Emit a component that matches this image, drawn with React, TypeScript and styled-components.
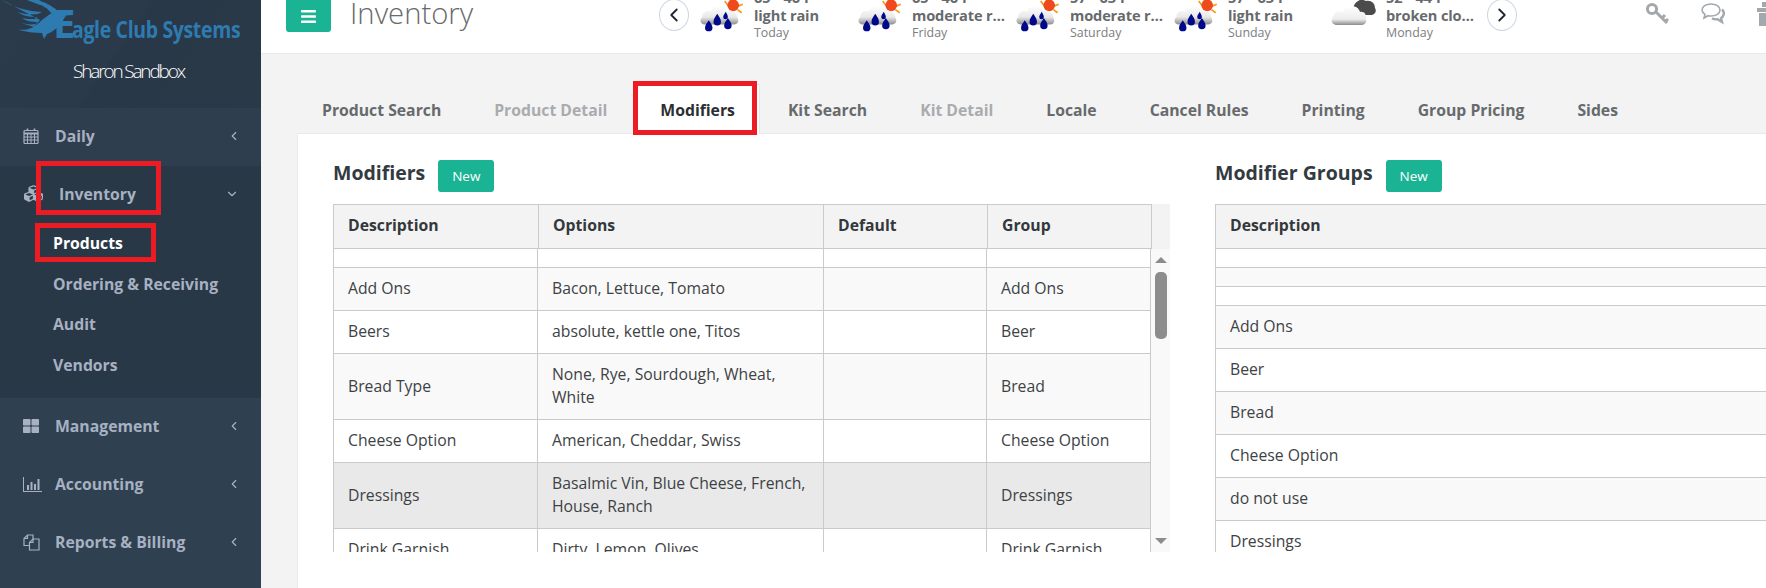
import React from 'react';
import styled, { createGlobalStyle } from 'styled-components';
import { FaCubes, FaThLarge, FaBars } from 'react-icons/fa';
import { FiChevronLeft, FiChevronRight, FiChevronDown } from 'react-icons/fi';

const Global = createGlobalStyle`
  html, body { margin: 0; padding: 0; background: #f3f3f4; }
  body { font-family: "Open Sans", "Liberation Sans", sans-serif; color: #676a6c; }
  * { box-sizing: border-box; }
`;

const Page = styled.div`
  position: relative;
  display: flex;
  width: 1766px;
  height: 588px;
  overflow: hidden;
`;

const Sidebar = styled.aside`
  flex: none;
  width: 261px;
  display: flex;
  flex-direction: column;
  background: #2f4050;
`;

const Brand = styled.div`
  height: 108px;
  background: linear-gradient(125deg, #2b3b4b 0%, #2a3a4a 45%, #293848 46%, #2a3947 100%);
  display: flex;
  flex-direction: column;
`;

const Logo = styled.div`
  position: relative;
  height: 58px;
  padding-left: 53px;
  display: flex;
  align-items: baseline;
  color: #2e7bb2;
  font-weight: 700;
  line-height: 58px;
  svg { position: absolute; left: 0; top: 0; }
`;

const LogoInitial = styled.span`
  font-size: 40px;
  line-height: 58px;
  font-weight: 700;
  margin-top: -9px;
`;

const LogoRest = styled.span`
  display: inline-block;
  font-size: 24px;
  font-weight: 700;
  letter-spacing: -0.4px;
  white-space: nowrap;
  margin-left: -3px;
  transform: scaleX(0.81);
  transform-origin: left center;
`;

const SiteName = styled.div`
  margin-top: 2px;
  text-align: center;
  color: #fff;
  font-size: 19px;
  font-weight: 300;
  letter-spacing: -2.15px;
  line-height: 22px;
  padding-right: 4px;
`;

const NavGroup = styled.div<{ $open?: boolean; $active?: boolean }>`
  background: ${p => (p.$open ? '#293846' : p.$active ? '#2f3e4e' : 'transparent')};
  padding-bottom: ${p => (p.$open ? '13px' : '0')};
`;

const NavRow = styled.div<{ $open?: boolean }>`
  height: ${p => (p.$open ? '57px' : '58px')};
  display: flex;
  align-items: center;
  padding: 0 ${p => (p.$open ? '22px' : '20px')} 2px ${p => (p.$open ? '24px' : '23px')};
  color: #a7b1c2;
  font-size: 15.75px;
  font-weight: 700;
`;

const NavIcon = styled.span<{ $wide?: boolean }>`
  flex: none;
  width: ${p => (p.$wide ? '35px' : '32px')};
  display: flex;
  align-items: center;
  font-size: ${p => (p.$wide ? '19px' : '16px')};
`;

const NavLabel = styled.span`
  flex: 1;
`;

const SubRow = styled.div<{ $current?: boolean }>`
  height: 40.5px;
  display: flex;
  align-items: center;
  padding-left: 53px;
  font-size: 15.75px;
  font-weight: 700;
  color: ${p => (p.$current ? '#fff' : '#a7b1c2')};
`;

const Main = styled.main`
  flex: 1;
  min-width: 0;
  display: flex;
  flex-direction: column;
  background: #f3f3f4;
`;

const TopBar = styled.header`
  flex: none;
  height: 54px;
  background: #fff;
  border-bottom: 1px solid #e7eaec;
  display: flex;
  align-items: flex-start;
  overflow: hidden;
  padding-left: 25px;
`;

const MenuButton = styled.div`
  flex: none;
  width: 45px;
  height: 32px;
  background: #1ab394;
  border-radius: 0 0 3px 3px;
  color: #fff;
  display: flex;
  align-items: center;
  justify-content: center;
  font-size: 17px;
`;

const PageTitle = styled.h1`
  flex: none;
  width: 309px;
  margin: -8px 0 0 19px;
  font-size: 29.25px;
  line-height: 42px;
  font-weight: 300;
  color: #676a6c;
`;

const RoundButton = styled.div<{ $next?: boolean }>`
  flex: none;
  width: 30px;
  height: 32px;
  margin-top: -1px;
  margin-left: ${p => (p.$next ? '8px' : '0')};
  border: 1px solid #cfd6e0;
  border-radius: 50%;
  background: #fff;
  color: #1c2733;
  display: flex;
  align-items: center;
  justify-content: center;
  font-size: 22px;
`;

const Weather = styled.div`
  flex: none;
  width: 158px;
  display: flex;
  align-items: flex-start;
  padding-left: 10px;
`;

const WeatherIconBox = styled.div`
  flex: none;
  width: 55px;
  height: 34px;
`;

const WeatherText = styled.div`
  flex: none;
  width: 97px;
  margin-top: -9px;
`;

const Temp = styled.div`
  font-size: 14.5px;
  line-height: 14px;
  font-weight: 700;
  white-space: nowrap;
`;

const Condition = styled.div`
  font-size: 14.6px;
  line-height: 20px;
  font-weight: 700;
  white-space: nowrap;
  overflow: hidden;
  text-overflow: ellipsis;
  letter-spacing: -0.15px;
`;

const Day = styled.div`
  font-size: 12.4px;
  line-height: 15px;
  color: #7b7e80;
`;

const TopIcons = styled.div`
  flex: none;
  display: flex;
  gap: 32px;
  margin-left: 128px;
  margin-top: 2px;
  color: #a8adb2;
`;

const TabBar = styled.nav`
  flex: none;
  height: 79px;
  padding: 30px 0 0 36px;
  display: flex;
  align-items: stretch;
`;

const Tab = styled.div<{ $active?: boolean; $disabled?: boolean }>`
  flex: none;
  height: 50px;
  padding: 0 24px;
  margin-right: 3px;
  display: flex;
  align-items: center;
  font-size: 15.75px;
  font-weight: 700;
  white-space: nowrap;
  color: ${p => (p.$active ? '#2b2f33' : p.$disabled ? '#a9abad' : '#676a6c')};
  background: ${p => (p.$active ? '#fff' : 'transparent')};
  border: 1px solid ${p => (p.$active ? '#e7eaec' : 'transparent')};
  border-bottom: 0;
  position: relative;
  z-index: 1;
`;

const Panel = styled.section`
  flex: 1;
  min-height: 0;
  margin-left: 36px;
  background: #fff;
  border-top: 1px solid #e7eaec;
  border-left: 1px solid #e7eaec;
  padding: 26px 0 0 35px;
  display: flex;
  gap: 45px;
  overflow: hidden;
`;

const Column = styled.div<{ $width: number }>`
  flex: none;
  width: ${p => p.$width}px;
`;

const SectionHead = styled.div`
  height: 32px;
  display: flex;
  align-items: center;
  gap: 13px;
  margin-bottom: 12px;
`;

const SectionTitle = styled.h2`
  margin: -7px 0 0 0;
  font-size: 19.5px;
  line-height: 24px;
  font-weight: 700;
  color: #333a40;
  white-space: nowrap;
`;

const NewButton = styled.button`
  width: 56px;
  height: 32px;
  border: 0;
  border-radius: 3px;
  background: #1ab394;
  color: #fff;
  font: 400 13.5px "Open Sans", sans-serif;
  padding: 0;
`;

const HeadWrap = styled.div`
  height: 45px;
  background: #f3f3f3;
`;

const GridTable = styled.table<{ $width: number }>`
  table-layout: fixed;
  width: ${p => p.$width}px;
  border-collapse: collapse;
  font-size: 15.75px;
  color: #3d4245;
`;

const HeadCell = styled.th<{ $width?: number }>`
  width: ${p => (p.$width ? `${p.$width}px` : 'auto')};
  height: 44px;
  padding: 0 14px 2px;
  text-align: left;
  font-weight: 700;
  color: #33383c;
  background: #f3f3f3;
  border: 1px solid #cacaca;
  border-bottom: 2px solid #cacaca;
`;

const BodyWrap = styled.div`
  height: 303px;
  display: flex;
  overflow: hidden;
`;

const BodyRow = styled.tr<{ $odd?: boolean; $hover?: boolean }>`
  background: ${p => (p.$hover ? '#e9e9e9' : p.$odd ? '#f9f9f9' : '#fff')};
`;

const BodyCell = styled.td<{ $blank?: boolean; $width?: number }>`
  width: ${p => (p.$width ? `${p.$width}px` : 'auto')};
  padding: ${p => (p.$blank ? '9px 14px' : '9px 14px 10px')};
  height: ${p => (p.$blank ? '18px' : 'auto')};
  line-height: 23px;
  border: 1px solid #cacaca;
  border-top: 0;
`;

const Scrollbar = styled.div`
  flex: none;
  width: 20px;
  background: #f9f9f9;
  display: flex;
  flex-direction: column;
  align-items: center;
  padding-top: 8px;
  padding-bottom: 8px;
`;

const ArrowUp = styled.div`
  width: 0;
  height: 0;
  border-left: 6px solid transparent;
  border-right: 6px solid transparent;
  border-bottom: 6px solid #8c8c8c;
`;

const ArrowDown = styled.div`
  width: 0;
  height: 0;
  margin-top: auto;
  border-left: 6px solid transparent;
  border-right: 6px solid transparent;
  border-top: 6px solid #8c8c8c;
`;

const Thumb = styled.div`
  width: 12px;
  height: 67px;
  margin-top: 9px;
  border-radius: 5px;
  background: #8c8c8c;
`;

const Annotation = styled.div<{ $x: number; $y: number; $w: number; $h: number }>`
  position: absolute;
  left: ${p => p.$x}px;
  top: ${p => p.$y}px;
  width: ${p => p.$w}px;
  height: ${p => p.$h}px;
  border: 5px solid #ed1c24;
  z-index: 5;
  pointer-events: none;
`;

const Eagle = () => (
  <svg width="76" height="42" viewBox="0 0 76 42" fill="#2e7bb2">
    <path d="M2 0 C12 7 26 11 42 12 L38 14 C30 15 24 14 17 12 C22 15 28 17 37 17 L35 19 C30 19 26 19 22 18 C26 21 31 22 37 22 L36 24 C30 25 25 24 18 22 L34 27 L40 20 Z" />
    <path d="M27 0 L35 0 L44 5 L40 5 Z M33 0 L39 0 L52 8 L46 8 Z M40 1 C47 3 54 7 59 12 L52 14 Z" />
    <path d="M17 29.5 C27 31 35 28 42 20 L50 14 L57 11 L65 11 L72 13.5 L72 15 L66 15.5 L62 22 C58 28 52 32 47 34 L44 39 L42 33 C34 33 26 32 17 29.5 Z" />
  </svg>
);

const RainIcon = () => (
  <svg width="45" height="34" viewBox="0 0 42 32">
    <defs>
      <linearGradient id="cloudFill" x1="0" y1="0" x2="0" y2="1">
        <stop offset="0" stopColor="#ffffff" />
        <stop offset=".6" stopColor="#e8e8e8" />
        <stop offset="1" stopColor="#8f8f8f" />
      </linearGradient>
    </defs>
    <g stroke="#f59b1a" strokeWidth="1.6">
      <path d="M29 0 L31 4 M41 4 L36 6 M40 12 L36 9 M24 1 L27 5" />
    </g>
    <circle cx="32" cy="5" r="5.5" fill="#ee4a1d" />
    <path d="M5 23 C1 23 0 18 3 16 C3 11 8 9 11 11 C13 4 23 4 26 10 C31 9 36 12 36 17 C38 20 36 23 33 23 Z" fill="url(#cloudFill)" />
    <g fill="#00088c">
      <path d="M9 19 C11 22 12.5 24 12.5 26 A3.5 3.5 0 0 1 5.5 26 C5.5 24 7 22 9 19 Z" />
      <path d="M17 13 C19 16 20.5 18 20.5 20.5 A3.5 3.5 0 0 1 13.5 20.5 C13.5 18 15 16 17 13 Z" />
      <path d="M25 11 C26 13 27 14.5 27 16 A2.2 2.2 0 0 1 22.6 16 C22.6 14.5 24 13 25 11 Z" />
      <path d="M27 17 C29 20 30.5 22 30.5 24 A3.5 3.5 0 0 1 23.5 24 C23.5 22 25 20 27 17 Z" />
    </g>
  </svg>
);

const CloudIcon = () => (
  <svg width="46" height="28" viewBox="0 0 46 28">
    <defs>
      <linearGradient id="brokenFill" x1="0" y1="0" x2="0" y2="1">
        <stop offset="0" stopColor="#ffffff" />
        <stop offset=".7" stopColor="#ececec" />
        <stop offset="1" stopColor="#8a8a8a" />
      </linearGradient>
    </defs>
    <path d="M22 8 C24 1 30 -2 35 1 C40 0 44 3 44 8 C46 11 44 15 40 15 L26 15 Z" fill="#4b4b4b" />
    <path d="M6 25 C1 25 -1 20 2 17 C3 12 8 10 12 12 C14 4 27 4 29 12 C34 11 36 16 35 19 C36 22 34 25 31 25 Z" fill="url(#brokenFill)" />
  </svg>
);

const KeyIcon = () => (
  <svg width="24" height="26" viewBox="0 0 24 26" fill="none" stroke="#a3a8ad" strokeWidth="3">
    <circle cx="7" cy="7" r="4.6" />
    <path d="M11 10 L22 21 M17 16 L20 13 M20.5 19.5 L23 17" />
  </svg>
);

const ChatIcon = () => (
  <svg width="24" height="26" viewBox="0 0 24 26" fill="none" stroke="#a3a8ad" strokeWidth="1.6">
    <path d="M10 2 C15 2 19 4.5 19 8 C19 11.5 15 14 10 14 C9 14 8 14 7 13.7 L3 16 L4 12.3 C2 11 1 9.6 1 8 C1 4.5 5 2 10 2 Z" />
    <path d="M21 7.5 C22.6 9 23.2 11 22.5 13 C22 14.5 21 15.5 20 16.2 L21 20 L16.5 17.3 C14.5 17.6 12.5 17.2 11 16.3" strokeWidth="2.4" />
  </svg>
);

const GiftIcon = () => (
  <svg width="18" height="24" viewBox="0 0 18 24" fill="#a3a8ad">
    <path d="M0 6 H18 V10 H0 Z M2 11 H16 V24 H2 Z" />
    <path d="M5 0 H13 V5 H5 Z" />
  </svg>
);

const CalendarIcon = () => (
  <svg width="16" height="16" viewBox="0 0 16 16" fill="none" stroke="currentColor">
    <rect x="1" y="2.5" width="14" height="13" rx="1" strokeWidth="1.2" />
    <path d="M1 5.5 H15" strokeWidth="2" />
    <path d="M1 9 H15 M1 12 H15 M4.5 6 V15 M8 6 V15 M11.5 6 V15" strokeWidth="1" />
    <path d="M4.5 0.5 V3 M11.5 0.5 V3" strokeWidth="1.6" />
  </svg>
);

const ChartIcon = () => (
  <svg width="19" height="15" viewBox="0 0 19 15" fill="currentColor">
    <path d="M0 0 H1 V14 H19 V15 H0 Z" />
    <rect x="4" y="8" width="2" height="5" />
    <rect x="7.5" y="5" width="2" height="8" />
    <rect x="11" y="7" width="2" height="6" />
    <rect x="14.5" y="2" width="2" height="11" />
  </svg>
);

const FilesIcon = () => (
  <svg width="17" height="17" viewBox="0 0 17 17" fill="none" stroke="currentColor" strokeWidth="1.2">
    <path d="M6.5 11.5 H1 V4.5 L4.5 1 H10 V5" />
    <path d="M1 4.5 H4.5 V1" />
    <path d="M6.5 16 V8.5 L10 5 H16 V16 Z" />
    <path d="M6.5 8.5 H10 V5" />
  </svg>
);

const columns = [205, 285, 164, 164];

const rows: [string, string, string, boolean?][] = [
  ['Add Ons', 'Bacon, Lettuce, Tomato', 'Add Ons'],
  ['Beers', 'absolute, kettle one, Titos', 'Beer'],
  ['Bread Type', 'None, Rye, Sourdough, Wheat, White', 'Bread'],
  ['Cheese Option', 'American, Cheddar, Swiss', 'Cheese Option'],
  ['Dressings', 'Basalmic Vin, Blue Cheese, French, House, Ranch', 'Dressings', true],
  ['Drink Garnish', 'Dirty, Lemon, Olives', 'Drink Garnish'],
];

const groups = ['', '', '', 'Add Ons', 'Beer', 'Bread', 'Cheese Option', 'do not use', 'Dressings'];

const weather = [
  { temp: '65 • 46 F', text: 'light rain', day: 'Today', rain: true },
  { temp: '65 • 46 F', text: 'moderate rain', day: 'Friday', rain: true },
  { temp: '57 • 63 F', text: 'moderate rain', day: 'Saturday', rain: true },
  { temp: '57 • 63 F', text: 'light rain', day: 'Sunday', rain: true },
  { temp: '52 • 44 F', text: 'broken clouds', day: 'Monday', rain: false },
];

const tabs = [
  { label: 'Product Search' },
  { label: 'Product Detail', disabled: true },
  { label: 'Modifiers', active: true },
  { label: 'Kit Search' },
  { label: 'Kit Detail', disabled: true },
  { label: 'Locale' },
  { label: 'Cancel Rules' },
  { label: 'Printing' },
  { label: 'Group Pricing' },
  { label: 'Sides' },
];

export default function App() {
  return (
    <Page>
      <Global />
      <Sidebar>
        <Brand>
          <Logo>
            <Eagle />
            <LogoInitial>E</LogoInitial>
            <LogoRest>agle Club Systems</LogoRest>
          </Logo>
          <SiteName>Sharon Sandbox</SiteName>
        </Brand>
        <NavGroup $active>
          <NavRow>
            <NavIcon><CalendarIcon /></NavIcon>
            <NavLabel>Daily</NavLabel>
            <FiChevronLeft size={14} />
          </NavRow>
        </NavGroup>
        <NavGroup $open>
          <NavRow $open>
            <NavIcon $wide><FaCubes /></NavIcon>
            <NavLabel>Inventory</NavLabel>
            <FiChevronDown size={14} />
          </NavRow>
          <SubRow $current>Products</SubRow>
          <SubRow>Ordering &amp; Receiving</SubRow>
          <SubRow>Audit</SubRow>
          <SubRow>Vendors</SubRow>
        </NavGroup>
        <NavRow>
          <NavIcon><FaThLarge /></NavIcon>
          <NavLabel>Management</NavLabel>
          <FiChevronLeft size={14} />
        </NavRow>
        <NavRow>
          <NavIcon><ChartIcon /></NavIcon>
          <NavLabel>Accounting</NavLabel>
          <FiChevronLeft size={14} />
        </NavRow>
        <NavRow>
          <NavIcon><FilesIcon /></NavIcon>
          <NavLabel>Reports &amp; Billing</NavLabel>
          <FiChevronLeft size={14} />
        </NavRow>
      </Sidebar>

      <Main>
        <TopBar>
          <MenuButton><FaBars /></MenuButton>
          <PageTitle>Inventory</PageTitle>
          <RoundButton><FiChevronLeft /></RoundButton>
          {weather.map(w => (
            <Weather key={w.day}>
              <WeatherIconBox>{w.rain ? <RainIcon /> : <CloudIcon />}</WeatherIconBox>
              <WeatherText>
                <Temp>{w.temp}</Temp>
                <Condition>{w.text}</Condition>
                <Day>{w.day}</Day>
              </WeatherText>
            </Weather>
          ))}
          <RoundButton $next><FiChevronRight /></RoundButton>
          <TopIcons>
            <KeyIcon />
            <ChatIcon />
            <GiftIcon />
          </TopIcons>
        </TopBar>

        <TabBar>
          {tabs.map(t => (
            <Tab key={t.label} $active={t.active} $disabled={t.disabled}>{t.label}</Tab>
          ))}
        </TabBar>

        <Panel>
          <Column $width={837}>
            <SectionHead>
              <SectionTitle>Modifiers</SectionTitle>
              <NewButton>New</NewButton>
            </SectionHead>
            <HeadWrap>
              <GridTable $width={818}>
                <thead>
                  <tr>
                    <HeadCell $width={columns[0]}>Description</HeadCell>
                    <HeadCell $width={columns[1]}>Options</HeadCell>
                    <HeadCell $width={columns[2]}>Default</HeadCell>
                    <HeadCell $width={columns[3]}>Group</HeadCell>
                  </tr>
                </thead>
              </GridTable>
            </HeadWrap>
            <BodyWrap>
              <GridTable $width={817}>
                <tbody>
                  <BodyRow>
                    <BodyCell $blank $width={204} />
                    <BodyCell $blank $width={286} />
                    <BodyCell $blank $width={163} />
                    <BodyCell $blank $width={164} />
                  </BodyRow>
                  {rows.map((r, i) => (
                    <BodyRow key={r[0]} $odd={i % 2 === 0} $hover={r[3]}>
                      <BodyCell>{r[0]}</BodyCell>
                      <BodyCell>{r[1]}</BodyCell>
                      <BodyCell />
                      <BodyCell>{r[2]}</BodyCell>
                    </BodyRow>
                  ))}
                </tbody>
              </GridTable>
              <Scrollbar>
                <ArrowUp />
                <Thumb />
                <ArrowDown />
              </Scrollbar>
            </BodyWrap>
          </Column>

          <Column $width={620}>
            <SectionHead>
              <SectionTitle>Modifier Groups</SectionTitle>
              <NewButton>New</NewButton>
            </SectionHead>
            <HeadWrap>
              <GridTable $width={620}>
                <thead>
                  <tr>
                    <HeadCell>Description</HeadCell>
                  </tr>
                </thead>
              </GridTable>
            </HeadWrap>
            <BodyWrap>
              <GridTable $width={620}>
                <tbody>
                  {groups.map((g, i) => (
                    <BodyRow key={`${g}${i}`} $odd={i === 1 || (i >= 3 && i % 2 === 1)}>
                      <BodyCell $blank={!g}>{g}</BodyCell>
                    </BodyRow>
                  ))}
                </tbody>
              </GridTable>
            </BodyWrap>
          </Column>
        </Panel>
      </Main>

      <Annotation $x={36} $y={161} $w={125} $h={54} />
      <Annotation $x={35} $y={223} $w={121} $h={39} />
      <Annotation $x={633} $y={81} $w={124} $h={54} />
    </Page>
  );
}
